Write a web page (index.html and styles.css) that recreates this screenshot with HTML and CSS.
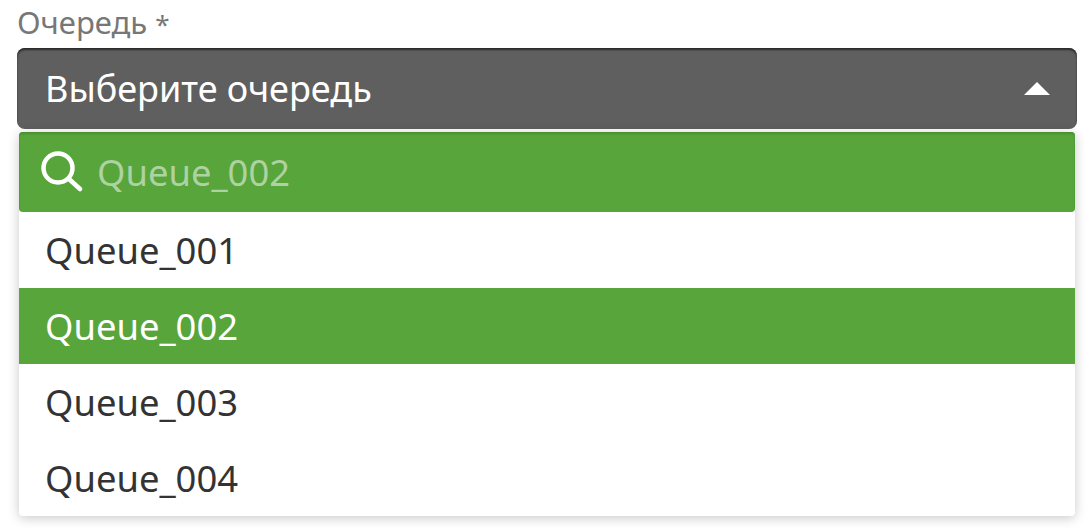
FILE: index.html
```html
<!DOCTYPE html>
<html lang="ru">
	<head>
		<meta charset="utf-8" />
		<title>Очередь</title>
		<link rel="stylesheet" href="styles.css">
	</head>
	<body>
		<div class="field">
			<label class="field-label">Очередь <span class="required">*</span></label>
			<div class="select-toggle">
				<span>Выберите очередь</span>
				<span class="caret"></span>
			</div>
			<div class="dropdown">
				<div class="search">
					<svg class="search-icon" width="42" height="42" viewBox="0 0 42 42" fill="none" stroke="#fff" stroke-width="4.5" stroke-linecap="round">
						<circle cx="17" cy="17" r="14.5" />
						<path d="M28 28 L39 38" />
					</svg>
					<span class="search-text">Queue_002</span>
				</div>
				<div class="option">Queue_001</div>
				<div class="option active">Queue_002</div>
				<div class="option">Queue_003</div>
				<div class="option">Queue_004</div>
			</div>
		</div>
	</body>
</html>
```

FILE: styles.css
```css
body {
	margin: 0;
	min-height: 528px;
	background-color: #fff;
	font-family: "Noto Sans", "Open Sans", sans-serif;
	color: #333;
}
.field {
	padding: 0 15px 0 17px;
}
.field-label {
	display: block;
	height: 48px;
	box-sizing: border-box;
	font-size: 31px;
	line-height: 44px;
	color: #777;
}
.required {
	font-size: 26px;
	line-height: 1;
}
.select-toggle {
	display: flex;
	justify-content: space-between;
	align-items: center;
	box-sizing: border-box;
	height: 81px;
	padding: 0 27px 0 28px;
	background-color: #5f5f5f;
	border-radius: 8px;
	box-shadow: inset 0 2px 2px #2a2a2a;
	color: #fff;
	font-size: 36px;
}
.caret {
	width: 0;
	height: 0;
	border-left: 13px solid transparent;
	border-right: 13px solid transparent;
	border-bottom: 13px solid #fff;
}
.dropdown {
	margin: 3px 2px 0;
	background-color: #fff;
	border-radius: 4px;
	box-shadow: 0 2px 12px rgba(0, 0, 0, 0.22);
}
.search {
	display: flex;
	align-items: center;
	gap: 14px;
	box-sizing: border-box;
	height: 80px;
	padding-left: 22px;
	background-color: #57a53b;
	border-radius: 4px;
	box-shadow: inset 0 2px 2px #4b8f33;
}
.search-icon {
	flex: none;
}
.search-text {
	font-size: 36.4px;
	color: #aed2a1;
}
.option {
	height: 76px;
	line-height: 77px;
	padding-left: 26px;
	font-size: 36.4px;
}
.option.active {
	background-color: #57a53b;
	color: #fff;
}
```
